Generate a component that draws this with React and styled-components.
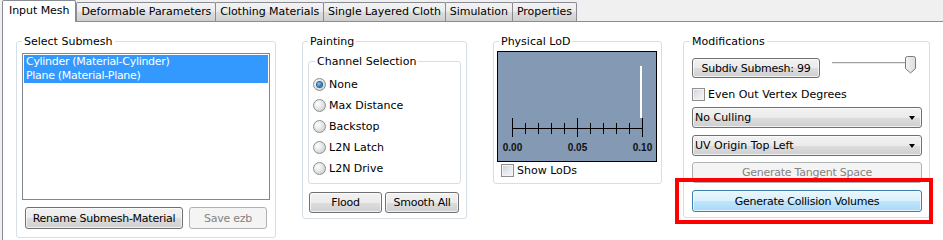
import React from 'react';
import styled, { createGlobalStyle } from 'styled-components';

const GlobalStyle = createGlobalStyle`
  html, body {
    margin: 0;
    padding: 0;
    background: #f0f0f0;
  }
  body {
    font-family: "DejaVu Sans", sans-serif;
    font-size: 11px;
    color: #000;
    overflow: hidden;
  }
`

const TabStrip = styled.div`
  display: flex;
  align-items: flex-end;
  height: 21px;
  padding-left: 2px;
`

const Tab = styled.div`
  box-sizing: border-box;
  position: relative;
  height: ${props => props.$active ? 22 : 19}px;
  margin-bottom: ${props => props.$active ? -1 : 0}px;
  margin-right: ${props => props.$active ? 0 : -1}px;
  padding: ${props => props.$active ? '0 6px' : '0 4px'};
  line-height: ${props => props.$active ? 20 : 18}px;
  border: 1px solid #898c95;
  border-bottom: none;
  border-radius: 2px 2px 0 0;
  background: ${props => props.$active
    ? '#fff'
    : 'linear-gradient(#f3f3f3 0%, #ebebeb 50%, #dddddd 51%, #cfcfcf 100%)'};
  z-index: ${props => props.$active ? 2 : 1};
  white-space: nowrap;
  letter-spacing: -0.05px;
`

const Pane = styled.div`
  position: relative;
  margin-left: 2px;
  height: 219px;
  box-sizing: border-box;
  border-left: 1px solid #898c95;
  border-top: 1px solid #898c95;
  background: #fff;
  padding: 13px 0 0 13px;
`

const Row = styled.div`
  display: flex;
  align-items: flex-start;
`

const Group = styled.fieldset`
  box-sizing: border-box;
  width: ${props => props.$w ? props.$w + 'px' : 'auto'};
  margin: 0 0 0 ${props => props.$ml || 0}px;
  padding: ${props => props.$pad};
  border: 1px solid #d5dfe5;
  border-radius: 3px;
  min-inline-size: 0;

  > legend {
    padding: 0 2px;
    margin-left: ${props => props.$lx || 0}px;
    line-height: 13px;
    font-size: 11px;
  }
`

const ListBox = styled.div`
  box-sizing: border-box;
  height: 147px;
  border: 1px solid #828790;
  padding: 1px;
  background: #fff;
`

const ListItem = styled.div`
  height: 14px;
  line-height: 14px;
  padding-left: 2px;
  background: ${props => props.$selected ? '#3399ff' : 'transparent'};
  color: ${props => props.$selected ? '#fff' : '#000'};
  white-space: nowrap;
  letter-spacing: -0.3px;
`

const ButtonRow = styled.div`
  display: flex;
  gap: ${props => props.$gap || 0}px;
  margin: ${props => props.$m || 0};
`

const Button = styled.button`
  box-sizing: border-box;
  height: ${props => props.$h || 21}px;
  width: ${props => props.$w ? props.$w + 'px' : '100%'};
  margin: 0;
  padding: 0;
  font: 11px "DejaVu Sans", sans-serif;
  letter-spacing: -0.25px;
  color: #000;
  border: 1px solid ${props => props.$primary ? '#3c7fb1' : '#707070'};
  border-radius: 3px;
  background: ${props => props.$primary
    ? 'linear-gradient(#eaf6fd 0%, #d9f0fc 50%, #bee6fd 51%, #a7d9f5 100%)'
    : 'linear-gradient(#f2f2f2 0%, #ebebeb 50%, #dddddd 51%, #cfcfcf 100%)'};
  box-shadow: inset 0 0 0 1px rgba(255, 255, 255, 0.7);
  white-space: nowrap;

  &:disabled {
    color: #838383;
    border-color: #adb2b5;
    background: #f4f4f4;
    box-shadow: none;
  }
`

const RadioRow = styled.label`
  display: flex;
  align-items: center;
  height: 21px;
  gap: 3px;
`

const RadioDot = styled.span`
  box-sizing: border-box;
  width: 13px;
  height: 13px;
  border-radius: 50%;
  border: 1px solid #8e8f8f;
  background: radial-gradient(circle at 35% 35%, #ffffff 0%, #e6e6e6 45%, #c4c4c4 100%);
  display: flex;
  align-items: center;
  justify-content: center;

  &::after {
    content: '';
    display: ${props => props.$checked ? 'block' : 'none'};
    width: 5px;
    height: 5px;
    border-radius: 50%;
    background: radial-gradient(circle at 40% 40%, #8ad0ff 0%, #1a72c4 60%, #0d4f8c 100%);
    box-shadow: 0 0 0 1px #2c628b;
  }
`

const CheckRow = styled.label`
  display: flex;
  align-items: center;
  gap: 3px;
  height: 13px;
  margin: ${props => props.$m || 0};
`

const CheckBox = styled.span`
  box-sizing: border-box;
  width: 13px;
  height: 13px;
  border: 1px solid #8e8f8f;
  background: linear-gradient(135deg, #cbcfd5 0%, #e6e8eb 50%, #f6f6f6 100%);
  box-shadow: inset 0 0 0 1px #f4f4f4;
`

const Chart = styled.div`
  box-sizing: border-box;
  width: 160px;
  height: 111px;
  border: 1px solid #000;
  background: #8499b4;

  svg {
    display: block;
  }
`

const Combo = styled.div`
  box-sizing: border-box;
  display: flex;
  align-items: center;
  justify-content: space-between;
  height: 21px;
  margin: ${props => props.$m || 0};
  padding: 0 6px 0 2px;
  border: 1px solid #707070;
  border-radius: 3px;
  background: linear-gradient(#f2f2f2 0%, #ebebeb 50%, #dddddd 51%, #cfcfcf 100%);
  box-shadow: inset 0 0 0 1px rgba(255, 255, 255, 0.7);

  &::after {
    content: '';
    border-left: 3.5px solid transparent;
    border-right: 3.5px solid transparent;
    border-top: 4px solid #000;
  }
`

const SubdivRow = styled.div`
  display: flex;
  align-items: flex-start;
  height: 20px;
`

const Slider = styled.div`
  position: relative;
  margin-left: 12px;
  width: 84px;
  height: 20px;
`

const Track = styled.div`
  margin-top: 4px;
  height: 1px;
  background: #a0a0a0;
  border-bottom: 1px solid #e7eaea;
`

const Thumb = styled.svg`
  position: absolute;
  right: 0;
  top: -2px;
`

const Highlight = styled.div`
  position: absolute;
  left: 672px;
  top: 156px;
  width: 258px;
  height: 46px;
  box-sizing: border-box;
  border: 4px solid #ff0000;
  pointer-events: none;
`

const tabs = ['Input Mesh', 'Deformable Parameters', 'Clothing Materials', 'Single Layered Cloth', 'Simulation', 'Properties'];
const channels = ['None', 'Max Distance', 'Backstop', 'L2N Latch', 'L2N Drive'];

function LodRuler() {
  const ticks = [];
  for (let i = 0; i <= 10; i++) {
    const x = 14 + i * 13;
    const major = i % 5 === 0;
    ticks.push(<line key={i} x1={x + 0.5} x2={x + 0.5} y1={major ? 66 : 71} y2={major ? 85 : 82} stroke="#000" strokeWidth="1" />);
  }
  return (
    <svg width="158" height="109" viewBox="0 0 158 109">
      <rect x="142" y="14" width="2" height="52" fill="#fff" />
      <line x1="14" x2="145" y1="76.5" y2="76.5" stroke="#000" strokeWidth="1" />
      {ticks}
      {['0.00', '0.05', '0.10'].map((t, i) => (
        <text key={t} x={14.5 + i * 65} y="99" textAnchor="middle"
          fontFamily="Liberation Sans, Arial, sans-serif" fontWeight="bold" fontSize="10" fill="#111">{t}</text>
      ))}
    </svg>
  );
}

export default function App() {
  return (
    <>
      <GlobalStyle />
      <TabStrip>
        {tabs.map((t, i) => <Tab key={t} $active={i === 0}>{t}</Tab>)}
      </TabStrip>
      <Pane>
        <Row>
          <Group $w={260} $pad="5px 5px 8px 5px">
            <legend>Select Submesh</legend>
            <ListBox>
              <ListItem $selected>Cylinder (Material-Cylinder)</ListItem>
              <ListItem $selected>Plane (Material-Plane)</ListItem>
            </ListBox>
            <ButtonRow $gap={6} $m="7px 0 0 3px">
              <Button $w={158} $h={22}>Rename Submesh-Material</Button>
              <Button $w={78} $h={22} disabled>Save ezb</Button>
            </ButtonRow>
          </Group>

          <Group $w={165} $ml={26} $pad="7px 5px 5px 5px">
            <legend>Painting</legend>
            <Group $pad="6px 4px 4px 4px" $lx={2}>
              <legend>Channel Selection</legend>
              {channels.map((c, i) => (
                <RadioRow key={c}>
                  <RadioDot $checked={i === 0} />
                  {c}
                </RadioRow>
              ))}
            </Group>
            <ButtonRow $gap={3} $m="8px 0 0 1px">
              <Button $w={73}>Flood</Button>
              <Button $w={74}>Smooth All</Button>
            </ButtonRow>
          </Group>

          <Group $w={169} $ml={26} $pad="3px 3px 6px 3px" $lx={2}>
            <legend>Physical LoD</legend>
            <Chart>
              <LodRuler />
            </Chart>
            <CheckRow $m="2px 0 0 4px">
              <CheckBox />
              Show LoDs
            </CheckRow>
          </Group>

          <Group $w={247} $ml={21} $pad="10px 7px 5px 8px" $lx={-2}>
            <legend>Modifications</legend>
            <SubdivRow>
              <Button $w={128} $h={20}>Subdiv Submesh: 99</Button>
              <Slider>
                <Track />
                <Thumb width="11" height="18" viewBox="0 0 11 18">
                  <defs>
                    <linearGradient id="thumbFill" x1="0" x2="1" y1="0" y2="0">
                      <stop offset="0" stopColor="#f4f4f4" />
                      <stop offset="1" stopColor="#dcdcdc" />
                    </linearGradient>
                  </defs>
                  <path d="M2.5 0.5 H8.5 Q10.5 0.5 10.5 2.5 V12.5 L5.5 17 L0.5 12.5 V2.5 Q0.5 0.5 2.5 0.5 Z"
                    fill="url(#thumbFill)" stroke="#7b7b7b" strokeWidth="1" />
                </Thumb>
              </Slider>
            </SubdivRow>
            <CheckRow $m="10px 0 0 0">
              <CheckBox />
              Even Out Vertex Degrees
            </CheckRow>
            <Combo $m="6px 0 0 0">No Culling</Combo>
            <Combo $m="7px 0 0 0">UV Origin Top Left</Combo>
            <ButtonRow $m="6px 0 0 0">
              <Button disabled>Generate Tangent Space</Button>
            </ButtonRow>
            <ButtonRow $m="7px 0 0 0">
              <Button $primary $h={22}>Generate Collision Volumes</Button>
            </ButtonRow>
          </Group>
        </Row>
        <Highlight />
      </Pane>
    </>
  );
}
